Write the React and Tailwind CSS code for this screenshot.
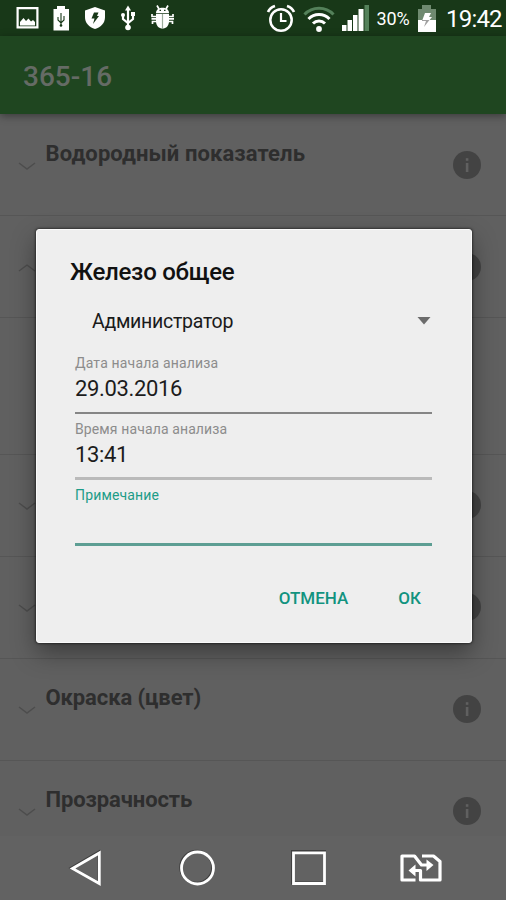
import React from "react";

function Chevron({ up }) {
  return (
    <svg className="h-[10px] w-[18px] shrink-0" viewBox="0 0 18 10" fill="none" stroke="#4d4d4d" strokeWidth="1.4">
      <path d={up ? "M1 8 L9 2 L17 8" : "M1 2 L9 8 L17 2"} />
    </svg>
  );
}

function Info() {
  return (
    <svg className="h-[28px] w-[28px] shrink-0" viewBox="0 0 28 28">
      <circle cx="14" cy="14" r="14" fill="#434343" />
      <rect x="12.8" y="7.2" width="2.6" height="2.6" fill="#606060" />
      <rect x="12.8" y="12" width="2.6" height="9" fill="#606060" />
    </svg>
  );
}

function Row({ title, up, spacing = "tracking-normal", top = "pt-0" }) {
  return (
    <div className={`flex h-[102px] shrink-0 items-start border-b border-[#565656] pl-[18px] pr-[25px] ${top}`}>
      <div className="mt-[46px] flex"><Chevron up={up} /></div>
      <div className={`ml-[9.5px] mt-[25px] flex-1 whitespace-nowrap text-[22px] leading-[28px] font-bold text-[#2e2e2e] ${spacing}`}>{title}</div>
      <div className="mt-[36px] flex"><Info /></div>
    </div>
  );
}

function StatusBar() {
  return (
    <div className="flex h-[36px] shrink-0 items-start bg-[#183818] text-white">
      <svg className="h-[36px] w-[180px] shrink-0" viewBox="0 0 180 36" fill="#fff">
        <path fillRule="evenodd" d="M16.5 7H38.5V28.5H16.5Z M18.7 9.2V26.3H36.3V9.2Z" />
        <path d="M20 25.5V22L23.5 18L26 21L28.5 18.5L31 21.5L33 20L35 22V25.5Z" />
        <path d="M57 6H65V9H69V30.5H53.5V9H57Z" />
        <path d="M61 13V26M58 17V20L61 23L64 20V16" stroke="#183818" fill="none" strokeWidth="1.1" />
        <circle cx="61" cy="25.5" r="1.3" fill="#183818" />
        <path d="M95 7L105 10.5V17C105 23 101 27 95 29C89 27 85 23 85 17V10.5Z" />
        <path d="M94 12.5H98.5L97 16H99L93 24L94.5 18.5H91.5Z" fill="#183818" />
        <path d="M128 9V28M123 15V19L128 23L133 19V14" fill="none" stroke="#fff" strokeWidth="2.2" />
        <path d="M128 5.5L131 10.5H125Z" />
        <circle cx="128" cy="27.5" r="2.8" />
        <circle cx="123" cy="15" r="2" />
        <path d="M131 12H135V16H131Z" />
        <path d="M156 13C156 6 169 6 169 13Z" />
        <path d="M157 5.5L159 9M168 5.5L166 9M152 14V16.5H157M173 14V16.5H168M151.5 18.8H174M152.5 24V21.5H157M172.5 24V21.5H168" fill="none" stroke="#fff" strokeWidth="1.7" />
        <path d="M156 13.8H169V21C169 26 166 28.5 162.5 28.5C159 28.5 156 26 156 21Z" />
        <path d="M162.5 14V28" stroke="#9cac9c" strokeWidth="1.2" />
        <path d="M159.5 10.3H161M164 10.3H165.5" stroke="#183818" strokeWidth="1.2" />
      </svg>
      <svg className="ml-[84px] h-[36px] w-[106px] shrink-0" viewBox="264 0 106 36" fill="none" stroke="#fff">
        <circle cx="281" cy="20" r="10.7" strokeWidth="2.5" />
        <path d="M281 13V21H286.5" strokeWidth="2.2" />
        <path d="M268 12Q270 7.5 275 6M287 6Q292 7.5 294 12" strokeWidth="2.7" />
        <path d="M304.5 14.5A20 20 0 0 1 333.5 14.5" strokeWidth="3" stroke="#54815a" />
        <path d="M308.5 19A14.5 14.5 0 0 1 329.5 19M313 23.5A8.5 8.5 0 0 1 325 23.5" strokeWidth="3" />
        <circle cx="319" cy="29" r="2.9" fill="#fff" stroke="none" />
        <g fill="#fff" stroke="none">
          <path d="M342 25H346.5V31H342ZM347.5 20H352V31H347.5ZM353 15H357.5V31H353ZM358.5 9H363.5V31H358.5Z" />
          <path d="M364.5 5H369V31H364.5Z" fill="#54815a" />
        </g>
      </svg>
      <span className="ml-[6.5px] mt-[9px] w-[35px] whitespace-nowrap text-[18px] leading-[20px] tracking-[-0.1px]">30%</span>
      <svg className="ml-[5px] h-[36px] w-[20px] shrink-0" viewBox="416 0 20 36">
        <path d="M421 5H430V9H435V32H417V9H421Z" fill="#6f8a70" />
        <path d="M417 20H435V32H417Z" fill="#fff" />
        <path d="M424 13H430L428 17H431L423 27L425 21H421Z" fill="#fff" />
        <path d="M421 20H428.5L423 27L425 21H421Z" fill="#a0a0a0" />
      </svg>
      <span className="ml-[9.5px] mt-[6px] whitespace-nowrap text-[24px] leading-[26px] tracking-[-0.8px]">19:42</span>
    </div>
  );
}

function NavBar() {
  return (
    <div className="h-[64px] shrink-0 bg-[#626262]">
      <svg className="h-[64px] w-[506px]" viewBox="0 836 506 64" fill="none">
        <g stroke="#3f3f3f" strokeWidth="3">
          <path d="M71.5 868L98.7 852V883Z" />
          <circle cx="196.7" cy="867.3" r="16" />
          <path d="M292.5 851.5H324.5V883H292.5Z" />
        </g>
        <g stroke="#fff" strokeWidth="2.8">
          <path d="M72.5 868.5L99.3 853V883.5Z" />
          <circle cx="197.5" cy="868" r="16" />
          <path d="M293.5 852.8H324.5V883.5H293.5Z" />
        </g>
        <g stroke="#fff" strokeWidth="3.2" strokeLinejoin="round">
          <path d="M415.5 880H402V856H414.5L421.5 865H429" />
          <path d="M422 856H433.5L440 861.5V880H420.5V870.5H413" />
        </g>
        <path d="M426.500 859.500L433.5 865L426.500 871ZM415.500 864.500L408.5 870.5L415.500 876.500Z" fill="#fff" />
      </svg>
    </div>
  );
}

function Dialog() {
  return (
    <div className="absolute left-[35.5px] top-[228.5px] flex h-[414px] w-[436px] flex-col rounded-[3px] border border-[#fafafa] bg-[#eeeeee] px-[38.5px] shadow-[0_10px_24px_rgba(0,0,0,0.38),0_0_3px_rgba(0,0,0,0.9)]">
      <h2 className="-ml-[5px] mt-[27px] h-[30px] shrink-0 whitespace-nowrap text-[24px] leading-[30px] font-medium tracking-[-0.25px] text-[#111]">Железо общее</h2>
      <div className="mt-[20.5px] flex h-[28px] shrink-0 items-center justify-between pl-[17px] pr-[1px]">
        <span className="whitespace-nowrap pt-[2px] text-[19.5px] leading-[28px] tracking-[-0.28px] text-[#1a1a1a]">Администратор</span>
        <svg className="h-[8px] w-[14px]" viewBox="0 0 14 8"><path d="M0.5 0H13.5L7 7.5Z" fill="#6b6b6b" /></svg>
      </div>
      <div className="mt-[18.5px] h-[18px] shrink-0 whitespace-nowrap text-[14px] leading-[18px] tracking-[0.17px] text-[#8c8c8c]">Дата начала анализа</div>
      <div className="mt-[2px] h-[30px] shrink-0 text-[22px] leading-[30px] tracking-[-0.35px] text-[#1c1c1c]">29.03.2016</div>
      <div className="mt-[8px] h-[2px] w-[357px] shrink-0 bg-[#858585]" />
      <div className="mt-[6px] h-[18px] shrink-0 whitespace-nowrap text-[14px] leading-[18px] tracking-[0.12px] text-[#8c8c8c]">Время начала анализа</div>
      <div className="mt-[2px] h-[30px] shrink-0 text-[22px] leading-[30px] tracking-[-0.35px] text-[#1c1c1c]">13:41</div>
      <div className="mt-[7px] h-[3px] w-[357px] shrink-0 bg-[#bababa]" />
      <div className="mt-[6px] h-[18px] shrink-0 whitespace-nowrap text-[14px] leading-[18px] tracking-[0.15px] text-[#1d9c88]">Примечание</div>
      <div className="mt-[39.5px] h-[3px] w-[357px] shrink-0 bg-[#5d9e93]" />
      <div className="mt-[39.5px] flex justify-end gap-[50px] pr-[11px] text-[17px] leading-[24px] font-medium text-[#12937f]">
        <span>ОТМЕНА</span>
        <span>ОК</span>
      </div>
    </div>
  );
}

export default function App() {
  return (
    <div className="relative flex h-[900px] w-[506px] flex-col overflow-hidden bg-[#606060] font-['Roboto',sans-serif]">
      <StatusBar />
      <div className="z-0 flex h-[78px] shrink-0 items-center bg-[#1f4620] pl-[23px] shadow-[0_2px_8px_rgba(0,0,0,0.4)]">
        <span className="pt-[4px] text-[28px] leading-[32px] font-medium text-[#656b65]">365-16</span>
      </div>
      <div className="flex h-[722px] flex-col overflow-hidden">
        <Row title="Водородный показатель" spacing="tracking-[0.1px]" top="pt-[1px]" />
        <Row title="" up top="pt-[1px]" />
        <div className="h-[137px] shrink-0 border-b border-[#565656]" />
        <Row title="" />
        <Row title="" />
        <Row title="Окраска (цвет)" spacing="tracking-[-0.1px]" />
        <Row title="Прозрачность" spacing="tracking-[-0.1px]" />
      </div>
      <NavBar />
      <Dialog />
    </div>
  );
}
